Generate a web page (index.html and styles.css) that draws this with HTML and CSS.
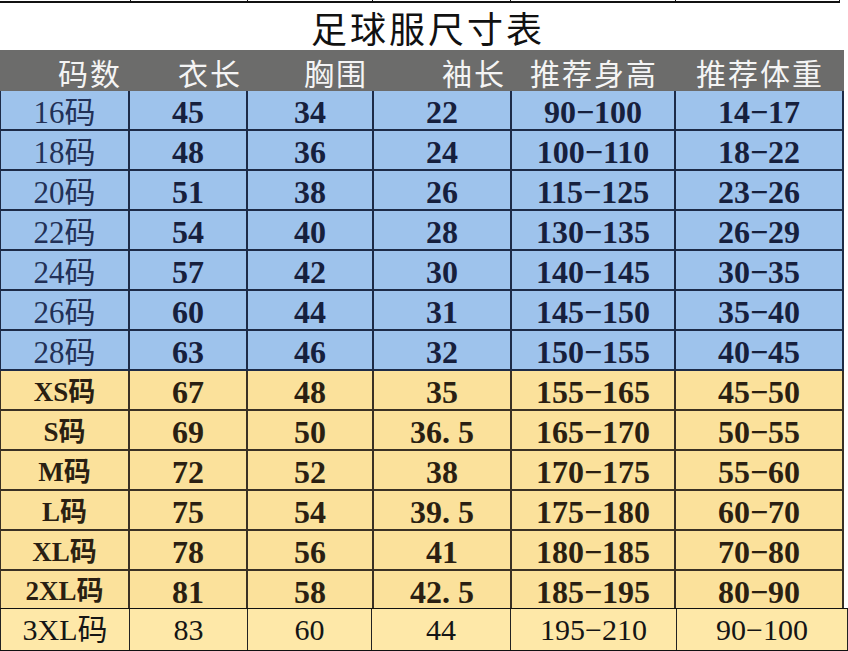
FILE: index.html
```html
<!DOCTYPE html>
<html lang="zh">
<head>
<meta charset="utf-8">
<title>足球服尺寸表</title>
<link rel="stylesheet" href="styles.css">
</head>
<body>
<div class="page">
  <div class="topstrip">
    <span></span><span></span><span></span><span></span><span></span><span></span>
  </div>
  <div class="title"><span>足球服尺寸表</span></div>
  <div class="table">
    <div class="row head">
      <div class="cell shift">码数</div>
      <div class="cell shift">衣长</div>
      <div class="cell shift">胸围</div>
      <div class="cell shift">袖长</div>
      <div class="cell">推荐身高</div>
      <div class="cell">推荐体重</div>
    </div>
    <div class="row blue"><div class="cell size">16码</div><div class="cell">45</div><div class="cell">34</div><div class="cell">22</div><div class="cell">90−100</div><div class="cell">14−17</div></div>
    <div class="row blue"><div class="cell size">18码</div><div class="cell">48</div><div class="cell">36</div><div class="cell">24</div><div class="cell">100−110</div><div class="cell">18−22</div></div>
    <div class="row blue"><div class="cell size">20码</div><div class="cell">51</div><div class="cell">38</div><div class="cell">26</div><div class="cell">115−125</div><div class="cell">23−26</div></div>
    <div class="row blue"><div class="cell size">22码</div><div class="cell">54</div><div class="cell">40</div><div class="cell">28</div><div class="cell">130−135</div><div class="cell">26−29</div></div>
    <div class="row blue"><div class="cell size">24码</div><div class="cell">57</div><div class="cell">42</div><div class="cell">30</div><div class="cell">140−145</div><div class="cell">30−35</div></div>
    <div class="row blue"><div class="cell size">26码</div><div class="cell">60</div><div class="cell">44</div><div class="cell">31</div><div class="cell">145−150</div><div class="cell">35−40</div></div>
    <div class="row blue"><div class="cell size">28码</div><div class="cell">63</div><div class="cell">46</div><div class="cell">32</div><div class="cell">150−155</div><div class="cell">40−45</div></div>
    <div class="row yellow"><div class="cell size">XS码</div><div class="cell">67</div><div class="cell">48</div><div class="cell">35</div><div class="cell">155−165</div><div class="cell">45−50</div></div>
    <div class="row yellow"><div class="cell size">S码</div><div class="cell">69</div><div class="cell">50</div><div class="cell">36. 5</div><div class="cell">165−170</div><div class="cell">50−55</div></div>
    <div class="row yellow"><div class="cell size">M码</div><div class="cell">72</div><div class="cell">52</div><div class="cell">38</div><div class="cell">170−175</div><div class="cell">55−60</div></div>
    <div class="row yellow"><div class="cell size">L码</div><div class="cell">75</div><div class="cell">54</div><div class="cell">39. 5</div><div class="cell">175−180</div><div class="cell">60−70</div></div>
    <div class="row yellow"><div class="cell size">XL码</div><div class="cell">78</div><div class="cell">56</div><div class="cell">41</div><div class="cell">180−185</div><div class="cell">70−80</div></div>
    <div class="row yellow cut"><div class="cell size">2XL码</div><div class="cell">81</div><div class="cell">58</div><div class="cell">42. 5</div><div class="cell">185−195</div><div class="cell">80−90</div></div>
  </div>
  <div class="row last"><div class="cell">3XL码</div><div class="cell">83</div><div class="cell">60</div><div class="cell">44</div><div class="cell">195−210</div><div class="cell">90−100</div></div>
</div>
</body>
</html>
```

FILE: styles.css
```css
* { box-sizing: border-box; }
html, body { margin: 0; padding: 0; background: #ffffff; }
.page {
  width: 848px;
  height: 651px;
  overflow: hidden;
  font-family: "Liberation Serif", "Noto Sans CJK SC", serif;
}
.topstrip {
  display: grid;
  grid-template-columns: 131px 117px 125px 138px 165px 164px;
  height: 4px;
  width: 840px;
}
.topstrip span {
  border-right: 1.5px solid #111;
  border-bottom: 2px solid #111;
  height: 3px;
}
.title {
  height: 46px;
  display: flex;
  align-items: center;
  justify-content: center;
  font-family: "Noto Sans CJK SC", serif;
  font-size: 36px;
  line-height: 1;
  color: #111;
  letter-spacing: 3px;
  padding-left: 8px;
  font-weight: normal;
}
.table { width: 844px; }
.row {
  display: grid;
  grid-template-columns: 130px 118px 126px 138px 164px 168px;
  height: 40px;
}
.cell {
  display: flex;
  align-items: center;
  justify-content: center;
  font-size: 32px;
  line-height: 1;
  white-space: nowrap;
  padding-top: 4px;
}
.head { height: 41px; background: #6c6c6b; }
.head .cell {
  color: #f4f4f4;
  font-family: "Noto Sans CJK SC", serif;
  font-size: 30px;
  letter-spacing: 2px;
  padding-top: 2px;
}
.head .cell.shift { justify-content: flex-end; padding-right: 6px; }
.head .cell.shift:first-child { padding-right: 8px; }
.blue { background: #9ec3ec; }
.blue .cell {
  color: #16203d;
  font-weight: bold;
  border-right: 2px solid #1d2b47;
  border-bottom: 2px solid #1d2b47;
}
.blue .cell:first-child { border-left: 1px solid #1d2b47; }
.blue .cell.size { font-weight: normal; color: #223157; font-size: 31px; }
.yellow { background: #fbe19b; }
.yellow .cell {
  color: #2a1f12;
  font-weight: bold;
  border-right: 2px solid #3a3024;
  border-bottom: 2px solid #3a3024;
}
.yellow .cell.size { font-size: 27px; }
.yellow .cell:first-child { border-left: 1px solid #3a3024; }
.yellow.cut { height: 37px; }
.yellow.cut .cell { border-bottom: none; padding-top: 4px; }
.last {
  width: 848px;
  height: 43px;
  background: #fee8a8;
  grid-template-columns: 130px 118px 124px 139px 166px 171px;
  border-top: 1.5px solid #111;
  border-bottom: 1.5px solid #111;
}
.last .cell {
  color: #151515;
  font-weight: normal;
  font-size: 30px;
  border-right: 1.5px solid #222;
  padding-top: 0;
}
.last .cell:first-child { border-left: 1px solid #222; }
```
